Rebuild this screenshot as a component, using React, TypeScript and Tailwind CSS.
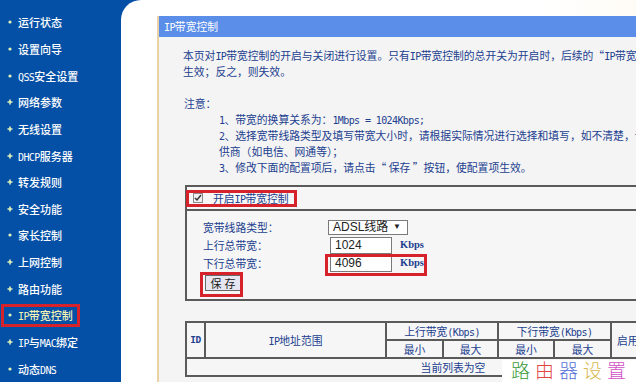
import React from "react";

type MenuItem = {
  label: React.ReactNode;
  sub: boolean;
  active?: boolean;
};

// half-width latin, like the old 宋体 ascii
const L = ({ children }: { children: React.ReactNode }) => (
  <span className="font-['DejaVu_Sans_Mono',monospace] text-[10px] tracking-[-0.6px] leading-none">{children}</span>
);

const menu: MenuItem[] = [
  { label: "运行状态", sub: false },
  { label: "设置向导", sub: false },
  { label: <><L>QSS</L>安全设置</>, sub: false },
  { label: "网络参数", sub: true },
  { label: "无线设置", sub: true },
  { label: <><L>DHCP</L>服务器</>, sub: true },
  { label: "转发规则", sub: true },
  { label: "安全功能", sub: true },
  { label: "家长控制", sub: false },
  { label: "上网控制", sub: true },
  { label: "路由功能", sub: true },
  { label: <><L>IP</L>带宽控制</>, sub: false, active: true },
  { label: <><L>IP</L>与<L>MAC</L>绑定</>, sub: true },
  { label: <>动态<L>DNS</L></>, sub: false },
];

const Bullet = ({ sub }: { sub: boolean }) =>
  sub ? (
    <svg width="6" height="6" viewBox="0 0 6 6" className="shrink-0">
      <path d="M3 0.5v5M0.5 3h5" stroke="#dff2b8" strokeWidth="1.6" />
    </svg>
  ) : (
    <svg width="6" height="6" viewBox="0 0 6 6" className="shrink-0">
      <circle cx="3" cy="3" r="1.6" fill="#dff2b8" />
    </svg>
  );

const Sidebar = () => (
  <div className="w-[121px] shrink-0 bg-[#0450a6] pt-[9px] flex flex-col">
    {menu.map((m, i) => (
      <div
        key={i}
        className="relative h-[26.8px] flex items-center gap-[5px] pl-[7px] text-[11px] leading-[14px] font-medium whitespace-nowrap"
      >
        <Bullet sub={m.sub} />
        <span className={m.active ? "text-[#f4f2b4]" : "text-white"}>{m.label}</span>
        {m.active ? (
          <span className="absolute left-[1px] top-[2px] w-[79px] h-[23px] border-[3px] border-[#d6222b]" />
        ) : null}
      </div>
    ))}
  </div>
);

const Kbps = () => (
  <span className="ml-[8px] font-['Liberation_Serif',serif] font-bold text-[10.5px] leading-none text-[#23408f]">
    Kbps
  </span>
);

const FormBox = () => (
  <div className="ml-[26px] mt-[10px] w-[470px] shrink-0 border-2 border-[#5a5a5a] bg-[#f6f6f6]">
    <div className="relative h-[24px] border-b-2 border-[#5a5a5a] flex items-center">
      <span className="absolute left-[-1px] top-[3px] w-[111px] h-[17px] border-[3px] border-[#d6222b]" />
      <span className="ml-[6px] w-[10px] h-[10px] border border-[#8a8a8a] bg-[#f0f0f0] flex items-center justify-center">
        <svg width="8" height="8" viewBox="0 0 8 8">
          <path d="M1 4l2 2 4-5" fill="none" stroke="#333" strokeWidth="1.5" />
        </svg>
      </span>
      <span className="ml-[10px]">
        开启<L>IP</L>带宽控制
      </span>
    </div>
    <div className="pl-[16px] pt-[7px] pb-[8px]">
      <div className="grid grid-cols-[125px_auto] auto-rows-[18px] items-center">
        <span>宽带线路类型：</span>
        <div className="w-[80px] h-[15px] border border-[#7a7a7a] bg-white flex items-center justify-between pl-[4px] pr-[6px] font-['Liberation_Sans','Noto_Sans_CJK_SC',sans-serif] text-[12px] leading-none text-[#222]">
          <span>ADSL线路</span>
          <span className="text-[8px]">▼</span>
        </div>
        <span>上行总带宽：</span>
        <div className="flex items-center ml-[2px]">
          <div className="w-[62px] h-[17px] border border-[#7a7a7a] bg-white pl-[4px] leading-[15px] font-['Liberation_Sans',sans-serif] text-[12px] text-[#222]">
            1024
          </div>
          <Kbps />
        </div>
        <span>下行总带宽：</span>
        <div className="relative flex items-center ml-[2px]">
          <div className="w-[62px] h-[17px] border border-[#7a7a7a] bg-white pl-[4px] leading-[15px] font-['Liberation_Sans',sans-serif] text-[12px] text-[#222]">
            4096
          </div>
          <Kbps />
          <span className="absolute left-[-5px] top-[-1px] w-[102px] h-[22px] border-[3px] border-[#d6222b]" />
        </div>
      </div>
      <div className="relative ml-[2px] mt-[3px] w-[36px] h-[16px]">
        <button className="w-[36px] h-[16px] border border-[#6a6a6a] bg-[#e6e6f0] text-[11px] leading-[14px] text-[#1a1a1a] tracking-[3px] pl-[3px]">
          保存
        </button>
        <span className="absolute left-[-5px] top-[-3px] w-[43px] h-[25px] border-[3px] border-[#d6222b]" />
      </div>
    </div>
  </div>
);

const cell = "border-2 border-[#5a5a5a] text-center h-[18px] p-0";

const RuleTable = () => (
  <table className="ml-[26px] mt-[20px] w-[534px] shrink-0 table-fixed border-collapse bg-[#f6f6f6] leading-[14px]">
    <colgroup>
      <col className="w-[19px]" />
      <col className="w-[181px]" />
      <col className="w-[57px]" />
      <col className="w-[55px]" />
      <col className="w-[56px]" />
      <col className="w-[57px]" />
      <col className="w-[38px]" />
      <col className="w-[71px]" />
    </colgroup>
    <tbody>
      <tr>
        <td rowSpan={2} className={cell + " font-['DejaVu_Sans_Mono',monospace] font-bold text-[9.5px] tracking-[-0.5px]"}>
          ID
        </td>
        <td rowSpan={2} className={cell}>
          <L>IP</L>地址范围
        </td>
        <td colSpan={2} className={cell}>
          上行带宽<L>(Kbps)</L>
        </td>
        <td colSpan={2} className={cell}>
          下行带宽<L>(Kbps)</L>
        </td>
        <td rowSpan={2} className={cell + " text-left pl-[5px]"}>启用</td>
        <td rowSpan={2} className={cell}>配置</td>
      </tr>
      <tr>
        <td className={cell}>最小</td>
        <td className={cell}>最大</td>
        <td className={cell}>最小</td>
        <td className={cell}>最大</td>
      </tr>
      <tr>
        <td colSpan={8} className={cell}>当前列表为空</td>
      </tr>
    </tbody>
  </table>
);

const Panel = () => (
  <div className="flex-1 flex flex-col border-l-2 border-[#ebd2a4] bg-[#f4f4f4] overflow-hidden text-[#22408f] text-[10.8px] leading-[16px] whitespace-nowrap">
    <div className="h-[21px] shrink-0 bg-[#5a8ee9] text-white pl-[5px] leading-[21px]">
      <L>IP</L>带宽控制
    </div>
    <div className="pl-[24px] mt-[10px] h-[16px]">
      本页对<L>IP</L>带宽控制的开启与关闭进行设置。只有<L>IP</L>带宽控制的总开关为开启时，后续的“<L>IP</L>带宽控制规则”才能
    </div>
    <div className="pl-[24px] h-[16px]">生效；反之，则失效。</div>
    <div className="pl-[25px] mt-[16px] h-[16px]">注意：</div>
    <div className="pl-[60px] h-[16px]">
      <L>1</L>、带宽的换算关系为：<L>1Mbps = 1024Kbps;</L>
    </div>
    <div className="pl-[60px] h-[16px]">
      <L>2</L>、选择宽带线路类型及填写带宽大小时，请根据实际情况进行选择和填写，如不清楚，请咨询您的带宽提
    </div>
    <div className="pl-[60px] h-[16px]">供商（如电信、网通等）；</div>
    <div className="pl-[60px] h-[16px]">
      <L>3</L>、修改下面的配置项后，请点击“ 保存 ”按钮，使配置项生效。
    </div>
    <FormBox />
    <RuleTable />
  </div>
);

export default function App() {
  return (
    <div
      lang="zh-CN"
      className="relative w-[636px] h-[382px] overflow-hidden flex bg-[#0450a6] font-['Noto_Sans_CJK_SC',sans-serif]"
    >
      <Sidebar />
      <div className="flex-1 flex bg-gradient-to-r from-white from-70% to-[#fdf8ec] rounded-tl-[20px] pt-[16px] pl-[36px]">
        <Panel />
      </div>
      <div className="absolute left-[502px] top-[360px] w-[134px] h-[22px] bg-white pl-[9px] text-[19px] leading-[20px] tracking-[5px] font-light whitespace-nowrap">
        <span className="text-[#3a9a3a]">路</span>
        <span className="text-[#e04646]">由</span>
        <span className="text-[#5470d8]">器</span>
        <span className="text-[#d8b850]">设</span>
        <span className="text-[#d150c6]">置</span>
      </div>
    </div>
  );
}
